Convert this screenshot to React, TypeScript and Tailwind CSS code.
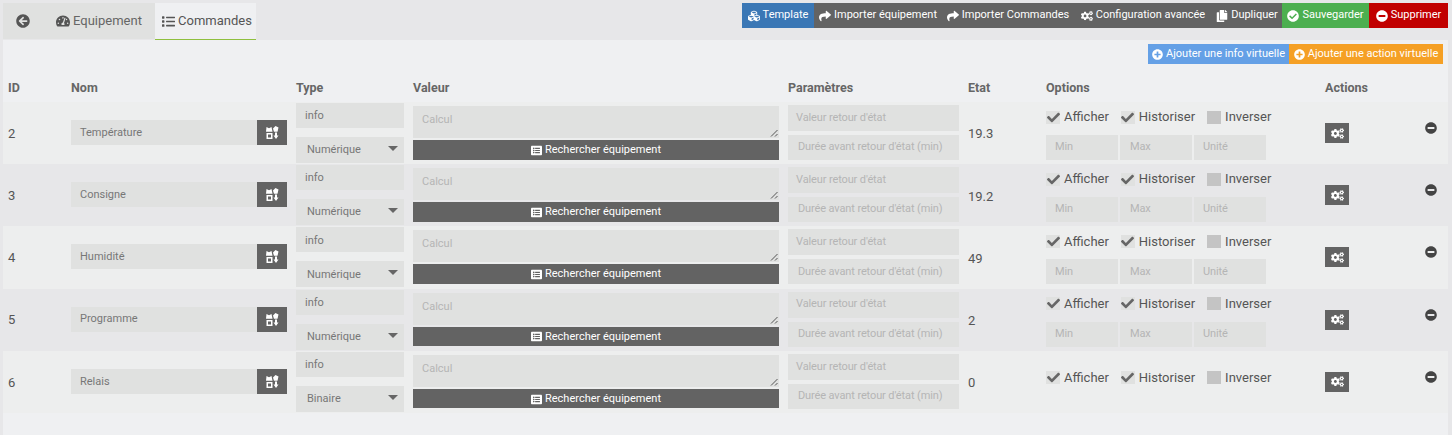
import type { ReactNode } from "react";
import {
  FaArrowCircleLeft,
  FaCheck,
  FaCheckCircle,
  FaCogs,
  FaCopy,
  FaCubes,
  FaList,
  FaListAlt,
  FaMinusCircle,
  FaPlusCircle,
  FaShare,
  FaTachometerAlt
} from "react-icons/fa";

const commands = [
  { id: 2, name: "Température", subtype: "Numérique", state: "19.3" },
  { id: 3, name: "Consigne", subtype: "Numérique", state: "19.2" },
  { id: 4, name: "Humidité", subtype: "Numérique", state: "49" },
  { id: 5, name: "Programme", subtype: "Numérique", state: "2" },
  { id: 6, name: "Relais", subtype: "Binaire", state: "0" }
];

function TopButton({ className, icon, label }: { className: string; icon: ReactNode; label: string }) {
  return (
    <button className={`flex h-[25px] items-center justify-center gap-[3px] whitespace-nowrap text-[11px] text-white [&>svg]:text-[12px] ${className}`}>
      {icon}
      {label}
    </button>
  );
}

function ConfigureIcon() {
  return (
    <svg viewBox="0 0 13 13" className="h-[13px] w-[13px]" fill="#fff">
      <path d="M0.5 1l2.5 1.2 2.5-1.2 1 4.8h-6.5z" />
      <path d="M7 2.5l2.5-2.5 3 1.5-1 4.3h-3.5z" />
      <path d="M0.5 7h6v6h-6zM2 8.5v3h3v-3z" fillRule="evenodd" />
      <path d="M9 6.5h2v3h1.5l-2.5 3.5-2.5-3.5h1.5z" />
    </svg>
  );
}

function Check({ checked, label }: { checked: boolean; label: string }) {
  return (
    <div className="flex items-center gap-[4px] text-[13px] text-[#555]">
      <span className={`flex h-[13px] w-[14px] items-center justify-center ${checked ? "bg-[#e0e1e0]" : "bg-[#c4c4c4]"}`}>
        {checked && <FaCheck className="text-[13px] text-[#666]" />}
      </span>
      {label}
    </div>
  );
}

function Field({ className, label }: { className: string; label: string }) {
  return <div className={`flex items-center whitespace-nowrap bg-[#e0e1e0] text-[11px] tracking-[-0.12px] text-[#b5b5b5] ${className}`}>{label}</div>;
}

function CommandRow({ command, even }: { command: (typeof commands)[number]; even: boolean }) {
  const isNumeric = command.subtype === "Numérique";
  return (
    <div className={`flex h-[62.2px] text-[#555] ${even ? "bg-[#e7e7e9]" : "bg-[#edeeee]"}`}>
      <div className="flex w-[68px] items-center pl-[5px] pt-[1px] text-[13px]">{command.id}</div>
      <div className="flex w-[225px] items-center pb-[1px]">
        <div className="flex h-[25px] w-[186px] items-center bg-[#e0e1e0] pl-[9px] pt-[1px] text-[11px] text-[#777]">{command.name}</div>
        <div className="flex h-[25px] w-[30px] items-center justify-center bg-[#636363]">
          <ConfigureIcon />
        </div>
      </div>
      <div className="flex w-[117px] flex-col pt-[1px]">
        <div className="flex h-[25px] w-[108px] items-center bg-[#e0e1e0] pl-[9px] pt-[2px] text-[11px] text-[#777]">info</div>
        <div className="mt-[9px] flex h-[26px] w-[108px] items-center justify-between bg-[#e0e1e0] pl-[11px] pr-[6px] pt-[1px] text-[11px] text-[#777]">
          {command.subtype}
          <span className="mb-[4px] border-x-[5px] border-t-[5px] border-x-transparent border-t-[#666]" />
        </div>
      </div>
      <div className="flex w-[375px] flex-col pt-[4px]">
        <div className="relative h-[32px] w-[366px] bg-[#e0e1e0] pl-[9px] pt-[6px] text-[11px] text-[#b5b5b5]">
          Calcul
          <svg viewBox="0 0 8 8" className="absolute bottom-[1px] right-[1px] h-[8px] w-[8px]" stroke="#555" fill="none">
            <path d="M1 7.5L7.5 1M5 7.5L7.5 5" />
          </svg>
        </div>
        <button className="mt-[2px] flex h-[19.5px] w-[366px] items-center justify-center gap-[3px] bg-[#636363] pt-[1px] text-[11px] text-white">
          <FaListAlt className="text-[11px]" />
          Rechercher équipement
        </button>
      </div>
      <div className="flex w-[180px] flex-col pt-[3px]">
        <Field className="h-[26px] w-[171px] px-[8px]" label="Valeur retour d'état" />
        <Field className="mt-[4px] h-[25px] w-[171px] px-[10px]" label="Durée avant retour d'état (min)" />
      </div>
      <div className="flex w-[78px] items-center pt-[2px] text-[13px]">{command.state}</div>
      <div className={`flex w-[279px] flex-col ${isNumeric ? "pt-[7px]" : "pt-[19px]"}`}>
        <div className="flex h-[16px] items-center gap-[12px]">
          <Check checked label="Afficher" />
          <Check checked label="Historiser" />
          <Check checked={false} label="Inverser" />
        </div>
        {isNumeric && (
          <div className="mt-[10px] flex gap-[2px]">
            <Field className="h-[25px] w-[72px] px-[9px]" label="Min" />
            <Field className="h-[25px] w-[72px] px-[10px]" label="Max" />
            <Field className="h-[25px] w-[72px] px-[9px]" label="Unité" />
          </div>
        )}
      </div>
      <div className="flex w-[100px] items-center">
        <button className="flex h-[20px] w-[24px] items-center justify-center bg-[#636363] text-[13px] text-white">
          <FaCogs />
        </button>
      </div>
      <div className="pt-[20px]">
        <FaMinusCircle className="text-[12px] text-[#444]" />
      </div>
    </div>
  );
}

export default function App() {
  return (
    <div className="h-[435px] w-[1452px] overflow-hidden bg-[#e7e7e9] pl-[3px] pr-[4px] pt-[3px] font-['Roboto',sans-serif]">
      <div className="flex h-[37px] items-start justify-between">
        <div className="flex">
          <div className="flex h-[36px] w-[39px] items-center justify-center bg-[#e0e1e0] text-[14px] text-[#555]">
            <FaArrowCircleLeft />
          </div>
          <div className="flex h-[36px] w-[113px] items-center gap-[3px] bg-[#e0e1e0] pl-[14px] text-[13px] text-[#666]">
            <FaTachometerAlt className="text-[14px] text-[#555]" />
            Equipement
          </div>
          <div className="flex h-[37px] w-[101px] items-center gap-[3px] border-b border-[#8fbf3f] bg-[#eff0f2] pl-[7px] text-[13px] text-[#555]">
            <FaList className="text-[13px]" />
            Commandes
          </div>
        </div>
        <div className="flex">
          <TopButton className="w-[72px] bg-[#3a77b5]" icon={<FaCubes />} label="Template" />
          <TopButton className="w-[128px] bg-[#636363]" icon={<FaShare />} label="Importer équipement" />
          <TopButton className="w-[132px] bg-[#636363]" icon={<FaShare />} label="Importer Commandes" />
          <TopButton className="w-[138px] bg-[#636363] [&>svg]:text-[11px]" icon={<FaCogs />} label="Configuration avancée" />
          <TopButton className="w-[70px] bg-[#636363]" icon={<FaCopy />} label="Dupliquer" />
          <TopButton className="w-[87px] bg-[#4caf50]" icon={<FaCheckCircle />} label="Sauvegarder" />
          <TopButton className="w-[79px] bg-[#c10000]" icon={<FaMinusCircle />} label="Supprimer" />
        </div>
      </div>
      <div className="h-[395px] bg-[#eff0f2]">
        <div className="flex justify-end pr-[5px] pt-[4px]">
          <button className="flex h-[20px] w-[141px] items-center justify-center gap-[3px] whitespace-nowrap bg-[#64a0e6] text-[11px] text-white">
            <FaPlusCircle />
            Ajouter une info virtuelle
          </button>
          <button className="flex h-[20px] w-[154px] items-center justify-center gap-[3px] whitespace-nowrap bg-[#f5a025] text-[11px] text-white">
            <FaPlusCircle />
            Ajouter une action virtuelle
          </button>
        </div>
        <div className="flex h-[38px] items-center pt-[11px] text-[12.5px] font-bold text-[#666]">
          <div className="w-[68px] pl-[5px]">ID</div>
          <div className="w-[225px]">Nom</div>
          <div className="w-[117px]">Type</div>
          <div className="w-[375px]">Valeur</div>
          <div className="w-[180px]">Paramètres</div>
          <div className="w-[78px]">Etat</div>
          <div className="w-[279px]">Options</div>
          <div>Actions</div>
        </div>
        {commands.map((command, index) => (
          <CommandRow key={command.id} command={command} even={index % 2 === 1} />
        ))}
      </div>
    </div>
  );
}
